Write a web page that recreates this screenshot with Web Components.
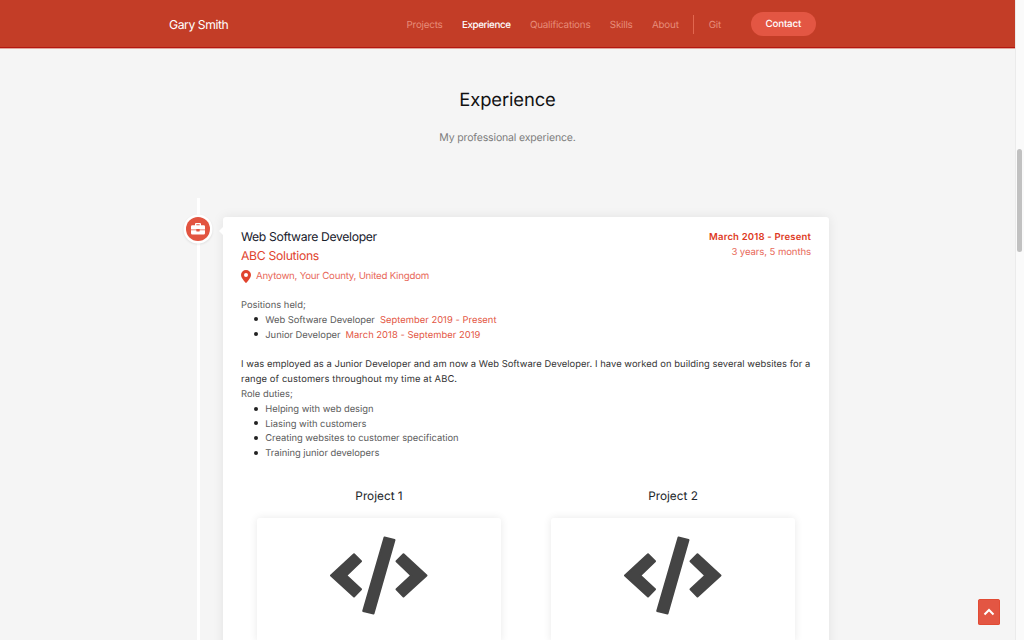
<!DOCTYPE html>
<html lang="en">
<head>
<meta charset="utf-8">
<title>Gary Smith - Experience</title>
<style>
html,body{margin:0;height:100%;overflow:hidden}
body{font-family:Inter,"Liberation Sans",sans-serif;font-size:9.2px;color:#212529;background:#f5f5f5;text-rendering:geometricPrecision}
</style>
</head>
<body>
<portfolio-page></portfolio-page>
<script>
function define(name, html) {
  const t = document.createElement('template');
  t.innerHTML = html;
  customElements.define(name, class extends HTMLElement {
    constructor() {
      super();
      this.attachShadow({mode: 'open'}).append(t.content.cloneNode(true));
    }
  });
}

define('nav-link', `<style>
:host{display:block;font-size:9.8px;letter-spacing:-.19px;line-height:16px;color:#e78c79;white-space:nowrap;padding-top:3.500px}
:host([active]){color:#fff;font-weight:500;letter-spacing:-.41px}
</style><slot></slot>`);

define('site-header', `<style>
:host{display:flex;align-items:center;height:47px;background:#c33d27;border-bottom:1px solid #b51710;box-shadow:0 1px 0 #e0a69d;padding:0 199px 0 169px;justify-content:space-between;flex:none}
.brand{color:#fff;font-size:12.2px;letter-spacing:-.43px;padding-top:2px}
nav{display:flex;align-items:center;padding-top:1px}
nav-link+nav-link{margin-left:19.400px}
i{width:1px;height:19px;background:#e2674f;margin:0 15px 0 14px}
.cta{background:#e35643;color:#fff;font-weight:500;font-size:9.8px;letter-spacing:-.2px;height:24.500px;line-height:26px;border-radius:12.5px;width:65.5px;text-align:center;margin-left:29.500px}
</style><div class="brand">Gary Smith</div>
<nav><nav-link>Projects</nav-link><nav-link active>Experience</nav-link><nav-link>Qualifications</nav-link><nav-link>Skills</nav-link><nav-link>About</nav-link><i></i><nav-link>Git</nav-link><div class="cta">Contact</div></nav>`);

define('section-heading', `<style>
:host{display:block;box-sizing:border-box;text-align:center;padding-top:39px;height:131px}
h2{margin:0;font-weight:400;font-size:18.4px;letter-spacing:-.12px;line-height:26px;color:#111}
p{margin:17px 0 0;font-size:10.5px;letter-spacing:-.15px;line-height:16px;color:#7d7d7d}
</style><h2><slot name="title"></slot></h2><p><slot></slot></p>`);

define('timeline-marker', `<style>
:host{display:flex;align-items:center;justify-content:center;width:24px;height:24px;border-radius:50%;background:#e25440;box-shadow:0 0 0 2.5px #fff,0 1px 2px 3px rgba(0,0,0,.07)}
svg{width:14px;height:12px;display:block}
</style><svg viewBox="0 0 14 12"><path fill="#fff" fill-rule="evenodd" d="M1.3 2.2H4V1Q4 0 5 0h4q1 0 1 1v1.200h2.700Q14 2.200 14 3.500V6.500H8.700V6H5.300v.5H0v-3Q0 2.200 1.300 2.200ZM5.300 1.200v1h3.400v-1ZM0 7.300h5.300v.7q0 .4.400.4h2.600q.4 0 .4-.4v-.7H14v3q0 1.200-1.300 1.200H1.300Q0 11.500 0 10.300Z"/></svg>`);

define('project-card', `<style>
:host{display:block;flex:1;padding:0 25px;text-align:center}
h4{margin:0 0 13px;font-weight:400;font-size:11.8px;line-height:17px;color:#212529}
div{height:124px;border-radius:3px;background:#fff;box-shadow:0 0 8px rgba(0,0,0,.09);padding-top:18px;box-sizing:border-box}
svg{width:98px;height:79px;display:block;margin:0 auto}
</style><h4><slot></slot></h4><div><svg viewBox="0 0 98 79"><g fill="#444" stroke="#444" stroke-width="2" stroke-linejoin="round"><path d="M1 39.500 24 18.200 31 25.300 16.200 39.500 31 53.200 24 60.500Z"/><path d="M96.500 39.500 73.500 18.200 66.500 25.300 81.300 39.500 66.500 53.200 73.500 60.500Z"/><path d="M54.500 1.500 64.500 4 43.500 77.500 33.200 75Z"/></g></svg></div>`);

define('job-card', `<style>
:host{display:block;position:relative;width:606px;height:460px;box-sizing:border-box;background:#fff;border-radius:3px;box-shadow:0 0 12px rgba(0,0,0,.08);padding:11px 18px 0}
:host::before{content:"";position:absolute;left:-4px;top:9px;border:solid transparent;border-width:5px 5px 5px 0;border-right-color:#fff;border-left:0}
header{display:flex;justify-content:space-between;height:70px}
h3,h4{margin:0;font-weight:400;font-size:12.200px;line-height:18px;letter-spacing:-.34px}
h3{color:#17202b}
h4{color:#e0432d;margin-top:1px;letter-spacing:-.3px}
.loc{display:flex;align-items:flex-start;gap:5px;font-size:9.700px;letter-spacing:-.23px;line-height:16px;color:#e8695a;margin-top:4px}
.loc svg{width:10px;height:13px;margin-top:1px}
.when{text-align:right;line-height:15px;padding-top:2px;color:#e8695a;font-size:9.600px;letter-spacing:-.1px}
.when b{display:block;font-weight:600;color:#de3a24;font-size:9.500px;letter-spacing:.18px}
.g{color:#5c5c5c;line-height:15px}
ul{margin:0;padding:.8px 0 0 24.300px;line-height:14.700px;color:#5c5c5c;letter-spacing:-.03px;list-style:none}
li::before{content:"";display:inline-block;width:4px;height:4px;border-radius:50%;background:#222;margin:0 7px 0 -11px;vertical-align:1.500px}
em{font-style:normal;color:#e35643;margin-left:5px;letter-spacing:.03px}
p{margin:14px 0 0;color:#333;line-height:15px;letter-spacing:.05px}
p span{letter-spacing:.11px}
.text{font-size:9.400px}
.row{display:flex;margin:25.900px -9px 0}
</style>
<header><div><h3>Web Software Developer</h3><h4>ABC Solutions</h4>
<div class="loc"><svg viewBox="0 0 10 13"><path fill="#e0432d" fill-rule="evenodd" d="M5 0a5 5 0 0 1 5 5c0 2.500-2.500 5-4.300 7.600q-.7.800-1.400 0C2.500 10 0 7.500 0 5a5 5 0 0 1 5-5Zm0 3a2 2 0 1 0 0 4 2 2 0 0 0 0-4Z"/></svg><span>Anytown, Your County, United Kingdom</span></div></div>
<div class="when"><b>March 2018 - Present</b><span>3 years, 5 months</span></div></header>
<div class="text"><div class="g">Positions held;</div>
<ul><li>Web Software Developer<em>September 2019 - Present</em></li><li>Junior Developer<em>March 2018 - September 2019</em></li></ul>
<p>I was employed as a Junior Developer and am now a Web Software Developer. I have worked on building several websites for a<br><span>range of customers throughout my time at ABC.</span></p>
<div class="g">Role duties;</div>
<ul><li>Helping with web design</li><li>Liasing with customers</li><li>Creating websites to customer specification</li><li>Training junior developers</li></ul></div>
<div class="row"><project-card>Project 1</project-card><project-card>Project 2</project-card></div>`);

define('job-timeline', `<style>
:host{display:grid;grid-template-columns:30px 606px;column-gap:10px;padding:38px 0 0 183px}
.rail{position:relative;height:460px}
.rail::before{content:"";position:absolute;left:14px;top:-19px;width:3px;height:480px;background:#fff}
timeline-marker{position:relative;margin-left:3px}
</style><div class="rail"><timeline-marker></timeline-marker></div><job-card></job-card>`);

define('scroll-track', `<style>
:host{display:block;width:9px;box-sizing:border-box;background:#fafafa;border-left:1px solid #ebebeb;padding:149px 0 0 1.300px}
div{width:5px;height:103px;border-radius:3px;background:#c1c1c1}
</style><div></div>`);

define('back-to-top', `<style>
:host{position:absolute;left:978px;top:599px;width:22px;height:26px;border-radius:2.500px;background:#e35643;display:flex;align-items:center;justify-content:center;box-shadow:inset 0 0 0 .5px #e04026}
svg{width:12px;height:8px}
</style><svg viewBox="0 0 12 8"><path d="M1.500 6.500 6 2l4.500 4.500" fill="none" stroke="#fff" stroke-width="2"/></svg>`);

define('portfolio-page', `<style>
:host{display:flex;width:1024px;height:640px;overflow:hidden;position:relative}
main{width:1015px;height:640px;overflow:hidden;display:flex;flex-direction:column}
section-heading,job-timeline{flex:none}
</style><main><site-header></site-header><section-heading><span slot="title">Experience</span>My professional experience.</section-heading><job-timeline></job-timeline></main><scroll-track></scroll-track><back-to-top></back-to-top>`);
</script>
</body>
</html>
